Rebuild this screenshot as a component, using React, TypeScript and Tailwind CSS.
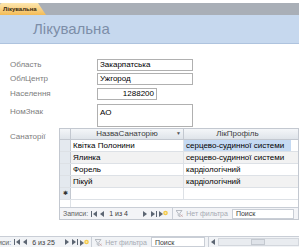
import React from "react";

const rows = [
  { name: "Квітка Полонини", profile: "серцево-судинної системи", alt: false, sel: true },
  { name: "Ялинка", profile: "серцево-судинної системи", alt: true, sel: false },
  { name: "Форель", profile: "кардіологічний", alt: false, sel: false },
  { name: "Пікуй", profile: "кардіологічний", alt: true, sel: false },
];

const First = () => (
  <svg width="6" height="6" viewBox="0 0 6 6">
    <rect x="0" y="0" width="1" height="6" fill="#5d6673" />
    <path d="M6 0L2 3L6 6Z" fill="#5d6673" />
  </svg>
);
const Prev = () => (
  <svg width="4" height="6" viewBox="0 0 4 6">
    <path d="M4 0L0 3L4 6Z" fill="#5d6673" />
  </svg>
);
const Next = () => (
  <svg width="4" height="6" viewBox="0 0 4 6">
    <path d="M0 0L4 3L0 6Z" fill="#5d6673" />
  </svg>
);
const Last = () => (
  <svg width="6" height="6" viewBox="0 0 6 6">
    <path d="M0 0L4 3L0 6Z" fill="#5d6673" />
    <rect x="5" y="0" width="1" height="6" fill="#5d6673" />
  </svg>
);
const NewRec = () => (
  <svg width="9" height="7" viewBox="0 0 9 7">
    <path d="M0 1L4 4L0 7Z" fill="#5d6673" />
    <circle cx="6.5" cy="3" r="2.3" fill="#f3c84a" />
    <circle cx="6.5" cy="3" r="1" fill="#fbe9a6" />
  </svg>
);
const Funnel = () => (
  <svg width="7" height="7" viewBox="0 0 7 7">
    <path d="M0 0.5H6L3.8 3.3V6.5L2.2 5.6V3.3Z" fill="none" stroke="#a8adb5" strokeWidth="0.8" />
    <path d="M4.5 4.5L6.8 6.8M6.8 4.5L4.5 6.8" stroke="#c9a0a0" strokeWidth="0.7" />
  </svg>
);

function NavBar({ rec, recW, tight = false, searchW }: { rec: string; recW: string; tight?: boolean; searchW: string }) {
  return (
    <div className="flex items-center h-full text-[7px] text-[#3b3b3b] leading-none whitespace-nowrap">
      <span className="text-[#5f5f5f] mr-[3px]">Записи:</span>
      <span className="mr-[3px]"><First /></span>
      <span className="mr-[3px]"><Prev /></span>
      <span className={`${recW} px-[2px] ${tight ? "mr-[5px]" : "mr-[8px]"}`}>{rec}</span>
      <span className={tight ? "mr-[3px]" : "mr-[4px]"}><Next /></span>
      <span className="mr-[2px]"><Last /></span>
      <span className={tight ? "mr-[2px]" : "mr-[4px]"}><NewRec /></span>
      <div className="flex items-center gap-[3px] border-l border-[#c9ced6] pl-[3px] pr-[4px] h-full text-[#a6abb3]">
        <Funnel />
        <span>Нет фильтра</span>
      </div>
      <div className={`flex items-center border border-[#c9ced6] bg-white h-[10px] pl-[3px] text-[#3b3b3b] ${searchW}`}>
        Поиск
      </div>
    </div>
  );
}

function Field({ label, value, w = "w-[96px]", right = false }: { label: string; value: string; w?: string; right?: boolean }) {
  return (
    <div className="flex items-center">
      <div className="w-[97px] pl-[10px] text-[8px] text-[#7c7c7c]">{label}</div>
      <div className={`${w} h-[12px] border border-[#b0b0b0] bg-white text-[8px] text-black px-[2px] flex items-center ${right ? "justify-end" : ""}`}>
        {value}
      </div>
    </div>
  );
}

export default function App() {
  return (
    <div className="w-[299px] h-[247px] overflow-hidden bg-white font-['Liberation_Sans',sans-serif] flex flex-col">
      <div className="h-[3px] shrink-0" />
      <div className="h-[12px] shrink-0 bg-[#a9afb7] flex items-end">
        <div className="h-[12px] w-[46px] pl-[3px] flex items-center text-[6px] font-bold text-[#3a2a10] bg-gradient-to-b from-[#fde7ae] to-[#f3bb55] [clip-path:polygon(0_0,38px_0,46px_100%,0_100%)] rounded-tl-[2px]">
          Лікувальна
        </div>
      </div>
      <div className="h-[29px] shrink-0 bg-[#c6d8ee] border-b border-[#aec3de] flex items-center pl-[33px] text-[15px] text-[#7d8ea8]">
        Лікувальна
      </div>

      <div className="flex flex-col pt-[15px] shrink-0">
        <Field label="Область" value="Закарпатська" />
        <div className="h-[2px]" />
        <Field label="ОблЦентр" value="Ужгород" />
        <div className="h-[3px]" />
        <Field label="Населення" value="1288200" w="w-[60px]" right />
        <div className="h-[4px]" />
        <div className="flex items-start">
          <div className="w-[97px] pl-[10px] pt-[2px] text-[8px] text-[#7c7c7c]">НомЗнак</div>
          <div className="w-[96px] h-[23px] border border-[#b0b0b0] bg-white text-[8px] text-black px-[2px] pt-[2px]">АО</div>
        </div>

        <div className="flex mt-[1px]">
          <div className="w-[68px] pl-[10px] pt-[3px] text-[8px] text-[#7c7c7c]">Санаторії</div>
          <div className="w-[240px] shrink-0 border border-[#c3c8d0] flex flex-col text-[8px]">
            <div className="flex h-[11px] bg-gradient-to-b from-[#f4f6f9] to-[#dfe4ea] border-b border-[#c3c8d0] text-[#3b3b3b]">
              <div className="w-[11px] border-r border-[#c3c8d0]" />
              <div className="w-[113px] border-r border-[#c3c8d0] flex items-center justify-center relative">
                НазваСанаторію
                <span className="absolute right-[2px] text-[5px] text-[#555]">▼</span>
              </div>
              <div className="w-[107px] flex items-center justify-center">ЛікПрофіль</div>
            </div>
            {rows.map((r) => (
              <div key={r.name} className={`flex h-[12px] border-b border-[#dde1e6] ${r.alt ? "bg-[#f2f2f2]" : "bg-white"}`}>
                <div className="w-[11px] bg-[#e4e9ef] border-r border-[#c3c8d0]" />
                <div className="w-[113px] border-r border-[#dde1e6] flex items-center px-[2px] text-black">{r.name}</div>
                <div className={`w-[107px] flex items-center px-[2px] text-black ${r.sel ? "bg-[#c5daf3]" : ""}`}>{r.profile}</div>
              </div>
            ))}
            <div className="flex h-[12px] border-b border-[#dde1e6] bg-white">
              <div className="w-[11px] bg-[#e4e9ef] border-r border-[#c3c8d0] flex items-center justify-center text-[6px] text-[#333]">✱</div>
              <div className="w-[113px] border-r border-[#dde1e6]" />
              <div className="w-[107px]" />
            </div>
            <div className="flex h-[7px]">
              <div className="w-[11px] border-r border-[#dde1e6]" />
            </div>
            <div className="h-[12px] border-t border-[#c9ced6] bg-[#f3f4f7] pl-[3px]">
              <NavBar rec="1 из 4" recW="w-[28px]" searchW="w-[62px]" />
            </div>
          </div>
        </div>
      </div>

      <div className="mt-auto h-[11px] shrink-0 bg-[#f1f3f6] border-t border-[#c9ced6] flex items-center overflow-hidden">
        <div className="-ml-[14px] flex items-center h-full shrink-0">
          <NavBar rec="6 из 25" recW="w-[30px]" tight searchW="w-[54px]" />
        </div>
        <div className="flex items-center h-full border-l border-[#c9ced6] ml-[3px] pl-[2px] shrink-0">
          <Prev />
        </div>
        <div className="flex-1 h-[8px] ml-[3px] bg-[#e9ecf0] border border-[#d3d7dd] flex items-center justify-center">
          <div className="w-[14px] h-[6px] bg-[#dfe3e9] border border-[#c4c9d0]" />
        </div>
      </div>
    </div>
  );
}
